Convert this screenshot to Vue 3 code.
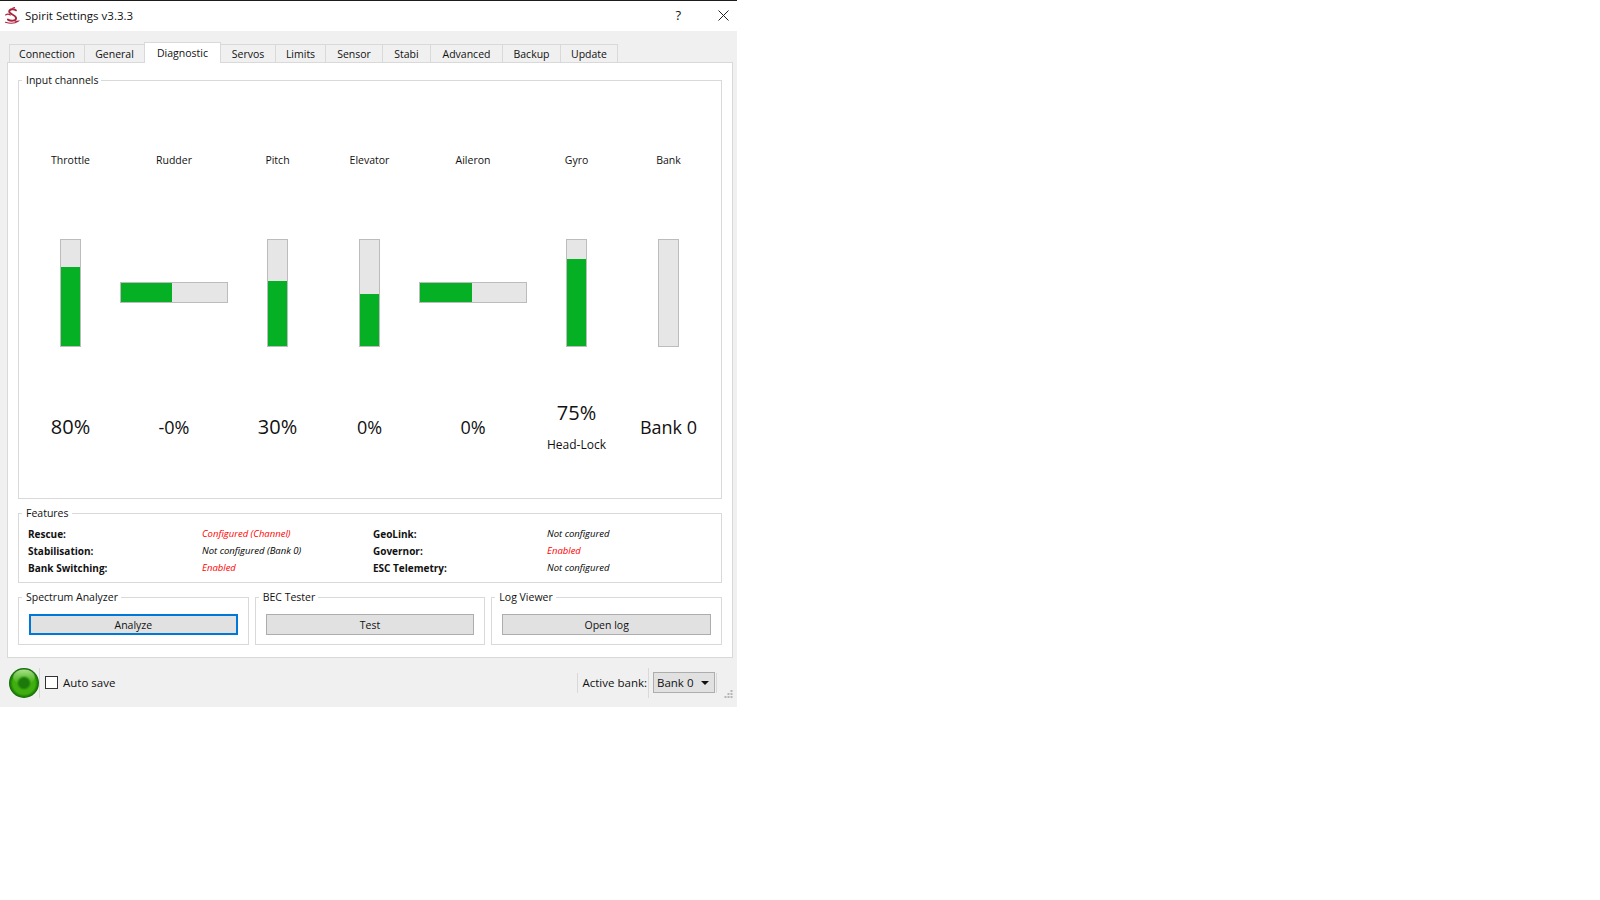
<script setup>
const tabs = [
  { name: 'Connection', width: 76 },
  { name: 'General', width: 60 },
  { name: 'Diagnostic', width: 77, active: true },
  { name: 'Servos', width: 55 },
  { name: 'Limits', width: 50 },
  { name: 'Sensor', width: 57 },
  { name: 'Stabi', width: 48 },
  { name: 'Advanced', width: 72 },
  { name: 'Backup', width: 58 },
  { name: 'Update', width: 57 }
]

const channels = [
  { name: 'Throttle', fill: 74.5, value: '80%', big: true },
  { name: 'Rudder', fill: 48, value: '-0%', horizontal: true },
  { name: 'Pitch', fill: 61.3, value: '30%', big: true },
  { name: 'Elevator', fill: 49, value: '0%', spaced: true },
  { name: 'Aileron', fill: 49, value: '0%', horizontal: true },
  { name: 'Gyro', fill: 82, value: '75%', big: true, note: 'Head-Lock' },
  { name: 'Bank', fill: 0, value: 'Bank 0', spaced: true }
]

const features = [
  { label: 'Rescue:', value: 'Configured (Channel)', on: true },
  { label: 'GeoLink:', value: 'Not configured' },
  { label: 'Stabilisation:', value: 'Not configured (Bank 0)' },
  { label: 'Governor:', value: 'Enabled', on: true },
  { label: 'Bank Switching:', value: 'Enabled', on: true },
  { label: 'ESC Telemetry:', value: 'Not configured' }
]

const tools = [
  { title: 'Spectrum Analyzer', button: 'Analyze', focused: true },
  { title: 'BEC Tester', button: 'Test' },
  { title: 'Log Viewer', button: 'Open log' }
]
</script>

<template>
  <div class="window">
    <header class="titlebar">
      <svg class="logo" width="16" height="17" viewBox="0 0 16 17" fill="none" stroke="#a8243f" stroke-linecap="round">
        <path d="M12 3.4C10 1.6 5.6 1.8 5.2 4.4c-.4 2.800 7 3.400 6.900 6.800-.1 2.800-5.200 3.200-8.200 1.400" stroke-width="1.900" />
        <path d="M1.600 8c1.600-1.200 3.200-1 4.800 0M1.400 15.300c4 1.200 9.800 1.200 13-1.200-1 0-2 .2-3.200.2M8.500 1.300l2-.8" stroke-width="1.100" />
      </svg>
      <span class="title">Spirit Settings v3.3.3</span>
      <span class="help">?</span>
      <svg class="close" width="11" height="11" viewBox="0 0 11 11" stroke="#222" fill="none">
        <path d="M.5.5l10 10M10.5.5l-10 10" />
      </svg>
    </header>

    <nav class="tabs">
      <div
        v-for="tab in tabs"
        :key="tab.name"
        class="tab"
        :class="{ active: tab.active }"
        :style="{ width: tab.width + 'px' }"
      >
        {{ tab.name }}
      </div>
    </nav>

    <main class="pane">
      <fieldset class="group channels">
        <legend>Input channels</legend>
        <div class="channel-row">
          <div
            v-for="ch in channels"
            :key="ch.name"
            class="channel"
            :class="{ wide: ch.horizontal, spaced: ch.spaced }"
          >
            <div class="channel-name">{{ ch.name }}</div>
            <div class="bar-area">
              <div class="bar" :class="ch.horizontal ? 'bar-h' : 'bar-v'">
                <div
                  class="bar-fill"
                  :style="ch.horizontal ? { width: ch.fill + '%' } : { height: ch.fill + '%' }"
                ></div>
              </div>
            </div>
            <div class="readout">
              <div class="value" :class="{ big: ch.big }">{{ ch.value }}</div>
              <div v-if="ch.note" class="note">{{ ch.note }}</div>
            </div>
          </div>
        </div>
      </fieldset>

      <fieldset class="group features">
        <legend>Features</legend>
        <div class="feature-grid">
          <template v-for="f in features" :key="f.label">
            <b>{{ f.label }}</b>
            <i :class="{ on: f.on }">{{ f.value }}</i>
          </template>
        </div>
      </fieldset>

      <div class="tool-row">
        <fieldset v-for="tool in tools" :key="tool.title" class="group tool">
          <legend>{{ tool.title }}</legend>
          <button class="btn" :class="{ focused: tool.focused }">{{ tool.button }}</button>
        </fieldset>
      </div>
    </main>

    <footer class="statusbar">
      <svg class="led" width="30" height="30" viewBox="0 0 30 30">
        <defs>
          <radialGradient id="ledBody" cx="50%" cy="50%" r="50%">
            <stop offset="0" stop-color="#3fb010" />
            <stop offset="0.74" stop-color="#3fae0e" />
            <stop offset="1" stop-color="#0b6504" />
          </radialGradient>
          <linearGradient id="ledShine" x1="0" y1="0" x2="0" y2="1">
            <stop offset="0" stop-color="#c4eeaa" stop-opacity="0.85" />
            <stop offset="1" stop-color="#8fdc66" stop-opacity="0" />
          </linearGradient>
          <radialGradient id="ledSpot" cx="50%" cy="50%" r="50%">
            <stop offset="0.6" stop-color="#1c7a0b" />
            <stop offset="1" stop-color="#1c7a0b" stop-opacity="0" />
          </radialGradient>
        </defs>
        <circle cx="15" cy="15" r="15" fill="url(#ledBody)" />
        <ellipse cx="15" cy="9" rx="11" ry="7.5" fill="url(#ledShine)" />
        <circle cx="15" cy="15" r="7.500" fill="url(#ledSpot)" />
      </svg>
      <span class="sep tall"></span>
      <span class="checkbox"></span>
      <span class="auto-save">Auto save</span>
      <span class="spacer"></span>
      <span class="sep short"></span>
      <span class="active-label">Active bank:</span>
      <span class="sep tall"></span>
      <div class="combo">
        <span>Bank 0</span>
        <span class="caret"></span>
      </div>
      <span class="sep short last"></span>
      <svg class="grip" width="9" height="9" viewBox="0 0 9 9" fill="#b5b5b5">
        <rect x="6.5" y="0" width="2" height="2" />
        <rect x="3.5" y="3" width="2" height="2" />
        <rect x="6.5" y="3" width="2" height="2" />
        <rect x="0.5" y="6" width="2" height="2" />
        <rect x="3.5" y="6" width="2" height="2" />
        <rect x="6.5" y="6" width="2" height="2" />
      </svg>
    </footer>
  </div>
</template>

<style>
html,
body {
  background: #fff;
}
</style>

<style scoped>
.window {
  width: 737px;
  height: 707px;
  background: #f0f0f0;
  border-top: 1px solid #1c1c1c;
  box-sizing: border-box;
  display: flex;
  flex-direction: column;
  font-family: "Open Sans", "Noto Sans", sans-serif;
  font-size: 10.5px;
  color: #111;
}

.titlebar {
  height: 30px;
  flex: none;
  background: #fff;
  display: flex;
  align-items: center;
  padding: 0 0 2px 4px;
  box-sizing: border-box;
}

.logo {
  margin-right: 5px;
}

.title {
  font-size: 11.5px;
  flex: 1;
}

.help {
  font-size: 13px;
  margin-right: 37px;
}

.close {
  margin-right: 8px;
}

.tabs {
  flex: none;
  height: 31px;
  display: flex;
  align-items: flex-end;
  padding: 0 0 0 9px;
}

.tab {
  height: 18px;
  box-sizing: border-box;
  background: #f0f0f0;
  border: 1px solid #d9d9d9;
  border-bottom: none;
  border-left: none;
  display: flex;
  align-items: center;
  justify-content: center;
}

.tab:first-child {
  border-left: 1px solid #d9d9d9;
}

.tab.active {
  height: 21px;
  background: #fff;
  border-left: 1px solid #d9d9d9;
  margin-left: -1px;
  margin-bottom: -1px;
  padding-bottom: 1px;
  position: relative;
  z-index: 1;
}

.pane {
  flex: none;
  width: 726px;
  height: 596px;
  margin-left: 7px;
  box-sizing: border-box;
  background: #fff;
  border: 1px solid #d9d9d9;
  padding: 9px 10px 0;
}

.group {
  margin: 0;
  padding: 0;
  min-width: 0;
  border: 1px solid #d9d9d9;
  box-sizing: border-box;
}

.group legend {
  margin-left: 3px;
  padding: 0 3px 0 4px;
  line-height: 16px;
  font-size: 10.5px;
}

.channels {
  height: 427px;
}

.channel-row {
  display: flex;
  gap: 39px;
  padding-left: 41px;
}

.channel {
  width: 21px;
  display: flex;
  flex-direction: column;
  align-items: center;
  padding-top: 63px;
}

.channel.wide {
  width: 108px;
}

.channel.spaced {
  margin-left: 32px;
}

.channel-name {
  height: 18px;
  line-height: 18px;
  white-space: nowrap;
}

.bar-area {
  height: 108px;
  margin-top: 70px;
  display: flex;
  align-items: center;
}

.bar {
  box-sizing: border-box;
  background: #e6e6e6;
  border: 1px solid #bcbcbc;
  display: flex;
}

.bar-v {
  width: 21px;
  height: 108px;
  align-items: flex-end;
}

.bar-h {
  width: 108px;
  height: 21px;
  margin-top: -1px;
}

.bar-v .bar-fill {
  width: 100%;
}

.bar-h .bar-fill {
  height: 100%;
}

.bar-fill {
  background: #06b025;
}

.readout {
  height: 55px;
  margin-top: 53px;
  display: flex;
  flex-direction: column;
  align-items: center;
  justify-content: center;
  white-space: nowrap;
}

.value {
  font-size: 18px;
  line-height: 26px;
}

.value:only-child {
  margin-bottom: 2px;
}

.value.big {
  font-size: 20px;
}

.note {
  font-size: 12px;
  line-height: 20px;
  margin-top: 9px;
}

.features {
  height: 78px;
  margin-top: 6px;
}

.feature-grid {
  display: grid;
  grid-template-columns: 174px 171px 174px 1fr;
  grid-auto-rows: 17px;
  align-items: center;
  padding: 4px 0 0 9px;
  font-size: 10px;
}

.feature-grid i {
  color: #000;
  font-size: 9.5px;
}

.feature-grid i.on {
  color: #f00;
}

.tool-row {
  display: flex;
  gap: 6px;
  margin-top: 6px;
}

.tool {
  flex: 1;
  height: 56px;
}

.btn {
  display: block;
  width: calc(100% - 20px);
  height: 21px;
  margin: 9px 10px 0;
  box-sizing: border-box;
  background: #e1e1e1;
  border: 1px solid #adadad;
  font: inherit;
  color: inherit;
  padding: 0;
}

.btn.focused {
  border: 2px solid #0078d7;
}

.statusbar {
  flex: 1;
  display: flex;
  align-items: center;
  padding-left: 9px;
  font-size: 11.5px;
  position: relative;
}

.sep {
  width: 1px;
  background: #d9d9d9;
  flex: none;
}

.sep.tall {
  height: 30px;
}

.sep.short {
  height: 20px;
}

.sep.last {
  margin-left: 1px;
  margin-right: 20px;
}

.checkbox {
  width: 13px;
  height: 13px;
  box-sizing: border-box;
  border: 1px solid #333;
  background: #fff;
  margin-left: 5px;
}

.auto-save {
  margin-left: 5px;
}

.spacer {
  flex: 1;
}

.active-label {
  margin: 0 1px 0 4px;
}

.combo {
  width: 62px;
  height: 21px;
  box-sizing: border-box;
  margin-left: 4px;
  background: #e1e1e1;
  border: 1px solid #adadad;
  display: flex;
  align-items: center;
  justify-content: space-between;
  padding: 0 5px 0 3px;
}

.caret {
  width: 0;
  height: 0;
  border-left: 4px solid transparent;
  border-right: 4px solid transparent;
  border-top: 4px solid #111;
}

.grip {
  position: absolute;
  right: 4px;
  bottom: 8px;
}
</style>
